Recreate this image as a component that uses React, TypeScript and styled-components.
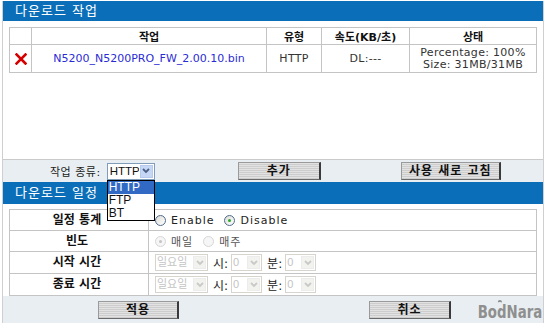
import styled, { createGlobalStyle } from 'styled-components';

const GlobalStyle = createGlobalStyle`
  body {
    margin: 0;
    background: #ffffff;
    font-family: 'DejaVu Sans', 'Noto Sans CJK KR', sans-serif;
  }
`;

const KR = `'DejaVu Sans', 'Noto Sans CJK KR', sans-serif`;
const FORM = `'Liberation Sans', 'Noto Sans CJK KR', sans-serif`;

const jobs = [
  {
    name: 'N5200_N5200PRO_FW_2.00.10.bin',
    type: 'HTTP',
    speed: 'DL:---',
    status: ['Percentage: 100%', 'Size: 31MB/31MB'],
  },
];

const RemoveIcon = () => (
  <svg width="12" height="12" viewBox="0 0 12 12">
    <path d="M1.5 1.5 L10.5 10.5 M10.5 1.5 L1.5 10.5" stroke="#d40000" strokeWidth="2.6" strokeLinecap="square" />
  </svg>
);

const Chevron = ({ color }: { color: string }) => (
  <svg width="8" height="6" viewBox="0 0 8 6">
    <path d="M1 1 L4 4 L7 1" fill="none" stroke={color} strokeWidth="1.8" />
  </svg>
);

const App = () => {
  return (
    <>
      <GlobalStyle />
      <Frame>
        <TitleBar $h={20}>다운로드 작업</TitleBar>
        <JobArea>
          <JobTable>
            <thead>
              <tr>
                <Th $w={21}></Th>
                <Th $w={234}>작업</Th>
                <Th $w={54}>유형</Th>
                <Th $w={87}>속도(KB/초)</Th>
                <Th>상태</Th>
              </tr>
            </thead>
            <tbody>
              {jobs.map((job) => (
                <tr key={job.name}>
                  <Td>
                    <RemoveIcon />
                  </Td>
                  <Td>
                    <FileLink>{job.name}</FileLink>
                  </Td>
                  <Td>{job.type}</Td>
                  <Td>{job.speed}</Td>
                  <Td>
                    {job.status.map((s) => (
                      <div key={s}>{s}</div>
                    ))}
                  </Td>
                </tr>
              ))}
            </tbody>
          </JobTable>
        </JobArea>

        <Toolbar>
          <Label>작업 종류:</Label>
          <SelectWrap>
            <SelectBox $w={48}>
              <SelectValue>HTTP</SelectValue>
              <ArrowBtn>
                <Chevron color="#4d6185" />
              </ArrowBtn>
            </SelectBox>
            <DropList>
              <DropItem $active>HTTP</DropItem>
              <DropItem>FTP</DropItem>
              <DropItem>BT</DropItem>
            </DropList>
          </SelectWrap>
          <Button $w={83} $ml={83}>추가</Button>
          <Button $w={100} $ml={80}>사용 새로 고침</Button>
        </Toolbar>

        <TitleBar $h={22}>다운로드 일정</TitleBar>
        <ScheduleArea>
          <FormGrid>
            <KeyCell $h={20}>일정 통계</KeyCell>
            <ValueCell>
              <Radio />
              <OptText>Enable</OptText>
              <Radio $checked />
              <OptText>Disable</OptText>
            </ValueCell>

            <KeyCell $h={20}>빈도</KeyCell>
            <ValueCell>
              <Radio $checked $disabled />
              <OptText $disabled>매일</OptText>
              <Radio $disabled />
              <OptText $disabled>매주</OptText>
            </ValueCell>

            {['시작 시간', '종료 시간'].map((k) => (
              <FormRow key={k}>
                <KeyCell $h={21}>{k}</KeyCell>
                <ValueCell>
                  <DisabledSelect $w={53}>일요일</DisabledSelect>
                  <Unit>시:</Unit>
                  <DisabledSelect $w={31}>0</DisabledSelect>
                  <Unit>분:</Unit>
                  <DisabledSelect $w={31}>0</DisabledSelect>
                </ValueCell>
              </FormRow>
            ))}
          </FormGrid>
        </ScheduleArea>

        <BottomBar>
          <Button $w={81} $ml={95}>적용</Button>
          <Button $w={82} $ml={190}>취소</Button>
          <Logo>
            <LogoHat />
            BodNara
          </Logo>
        </BottomBar>
      </Frame>
    </>
  );
};

export default App;

const DisabledSelect = ({ $w, children }: { $w: number; children: React.ReactNode }) => (
  <SelectBox $w={$w} $disabled>
    <SelectValue $disabled>{children}</SelectValue>
    <ArrowBtn $disabled>
      <Chevron color="#c9c9c9" />
    </ArrowBtn>
  </SelectBox>
);

const Frame = styled.div`
  margin: 1px 0 0 2px;
  width: 540px;
  border: 1px solid #cfcfcf;
  border-top: none;
`;

const TitleBar = styled.div<{ $h: number }>`
  height: ${({ $h }) => $h}px;
  line-height: ${({ $h }) => $h}px;
  padding-left: 12px;
  background: #0a6fb8;
  color: #ffffff;
  font-family: ${KR};
  font-size: 13px;
  letter-spacing: 1px;
`;

const JobArea = styled.div`
  height: 132px;
  padding: 6px 6px 0 6px;
  background: #ffffff;
`;

const JobTable = styled.table`
  width: 528px;
  border-collapse: collapse;
  font-size: 11px;
  border: 1px solid #b8b8b8;
`;

const Th = styled.th<{ $w?: number }>`
  width: ${({ $w }) => ($w ? `${$w}px` : 'auto')};
  height: 16px;
  padding: 0;
  border: 1px solid #c4c4c4;
  font-family: ${KR};
  font-size: 11px;
  font-weight: bold;
  color: #111111;
  text-align: center;
`;

const Td = styled.td`
  height: 27px;
  padding: 0;
  border: 1px solid #c4c4c4;
  text-align: center;
  color: #333333;
  line-height: 12px;
  letter-spacing: 0.3px;

  svg {
    display: block;
    margin: 0 auto;
  }
`;

const FileLink = styled.span`
  color: #2b2bd6;
  letter-spacing: 0;
`;

const Toolbar = styled.div`
  position: relative;
  display: flex;
  align-items: center;
  height: 22px;
  border-top: 1px solid #cacaca;
  background: #e8eef1;
`;

const Label = styled.span`
  margin-left: 47px;
  margin-right: 6px;
  font-family: ${KR};
  font-size: 11px;
  color: #222222;
  letter-spacing: 0.5px;
`;

const SelectWrap = styled.div`
  position: relative;
`;

const SelectBox = styled.div<{ $w: number; $disabled?: boolean }>`
  display: flex;
  align-items: stretch;
  flex-shrink: 0;
  width: ${({ $w }) => $w}px;
  height: 17px;
  border: 1px solid ${({ $disabled }) => ($disabled ? '#d6d4cc' : '#7f9db9')};
  background: #ffffff;
  box-sizing: border-box;
`;

const SelectValue = styled.span<{ $disabled?: boolean }>`
  flex: 1;
  padding-left: ${({ $disabled }) => ($disabled ? '1px' : '2px')};
  font-family: ${FORM};
  font-size: ${({ $disabled }) => ($disabled ? '11px' : '11.5px')};
  line-height: 15px;
  color: ${({ $disabled }) => ($disabled ? '#c4c4c4' : '#111111')};
  overflow: hidden;
  white-space: nowrap;
`;

const ArrowBtn = styled.span<{ $disabled?: boolean }>`
  display: flex;
  align-items: center;
  justify-content: center;
  flex-shrink: 0;
  width: 13px;
  margin: 1px;
  background: ${({ $disabled }) => ($disabled ? '#f2f2ee' : '#c6d6f5')};
  border: 1px solid ${({ $disabled }) => ($disabled ? '#ececec' : '#b7caed')};
  box-sizing: border-box;
`;

const DropList = styled.div`
  position: absolute;
  top: 17px;
  left: 0;
  width: 48px;
  border: 1px solid #000000;
  background: #ffffff;
  box-sizing: border-box;
  z-index: 5;
`;

const DropItem = styled.div<{ $active?: boolean }>`
  height: 13px;
  padding-left: 1px;
  font-family: ${FORM};
  font-size: 12px;
  line-height: 13px;
  color: ${({ $active }) => ($active ? '#ffffff' : '#111111')};
  background: ${({ $active }) => ($active ? '#316ac5' : 'transparent')};
`;

const Button = styled.div<{ $w: number; $ml: number }>`
  width: ${({ $w }) => $w}px;
  height: 18px;
  margin-left: ${({ $ml }) => $ml}px;
  box-sizing: border-box;
  border: 1px solid #9a9a9a;
  border-right: 2px solid #3a3a3a;
  border-bottom: 1px solid #6a6a6a;
  background: repeating-linear-gradient(
    to bottom,
    #e2e2e2 0px,
    #e2e2e2 1px,
    #cdcdcd 1px,
    #cdcdcd 2px
  );
  font-family: ${KR};
  font-size: 12px;
  font-weight: bold;
  letter-spacing: 1px;
  line-height: 16px;
  text-align: center;
  color: #111111;
`;

const ScheduleArea = styled.div`
  padding: 5px 6px 0 6px;
  background: #ffffff;
`;

const FormGrid = styled.div`
  display: grid;
  grid-template-columns: 139px 1fr;
  width: 528px;
  border-top: 1px solid #c4c4c4;
  border-left: 1px solid #c4c4c4;
  box-sizing: border-box;
`;

const FormRow = styled.div`
  display: contents;
`;

const KeyCell = styled.div<{ $h: number }>`
  height: ${({ $h }) => $h}px;
  line-height: ${({ $h }) => $h}px;
  padding-right: 4px;
  border-right: 1px solid #c4c4c4;
  border-bottom: 1px solid #c4c4c4;
  text-align: center;
  font-family: ${KR};
  font-size: 12px;
  font-weight: bold;
  color: #111111;
`;

const ValueCell = styled.div`
  display: flex;
  align-items: center;
  padding-left: 6px;
  border-right: 1px solid #c4c4c4;
  border-bottom: 1px solid #c4c4c4;
`;

const Radio = styled.span<{ $checked?: boolean; $disabled?: boolean }>`
  position: relative;
  width: 11px;
  height: 11px;
  margin-right: 5px;
  border-radius: 50%;
  border: 1px solid ${({ $disabled }) => ($disabled ? '#d6d6d6' : '#4f6a8e')};
  background: ${({ $disabled }) => ($disabled ? '#f6f6f6' : 'linear-gradient(135deg, #dcdcd6, #ffffff)')};
  box-sizing: border-box;

  &::after {
    content: '';
    display: ${({ $checked }) => ($checked ? 'block' : 'none')};
    position: absolute;
    top: 3px;
    left: 3px;
    width: 3px;
    height: 3px;
    border-radius: 50%;
    background: ${({ $disabled }) => ($disabled ? '#c4c4c4' : '#2ea52e')};
  }
`;

const OptText = styled.span<{ $disabled?: boolean }>`
  margin-right: 10px;
  font-family: ${KR};
  font-size: 11px;
  letter-spacing: 1px;
  color: ${({ $disabled }) => ($disabled ? '#555555' : '#222222')};
`;

const Unit = styled.span`
  margin: 0 3px 0 5px;
  font-family: ${KR};
  font-size: 12px;
  color: #222222;
`;

const BottomBar = styled.div`
  position: relative;
  display: flex;
  align-items: center;
  height: 27px;
  background: #e8eef1;
`;

const Logo = styled.div`
  position: absolute;
  right: 1px;
  bottom: 1px;
  font-family: 'DejaVu Sans', sans-serif;
  font-size: 18px;
  font-weight: bold;
  color: #8f8f8f;
  transform: scaleX(0.74);
  transform-origin: right bottom;
`;

const LogoHat = styled.span`
  position: absolute;
  top: -1px;
  left: 27px;
  width: 6px;
  height: 4px;
  border-top: 2px solid #8f8f8f;
  border-radius: 50% 50% 0 0;
`;
